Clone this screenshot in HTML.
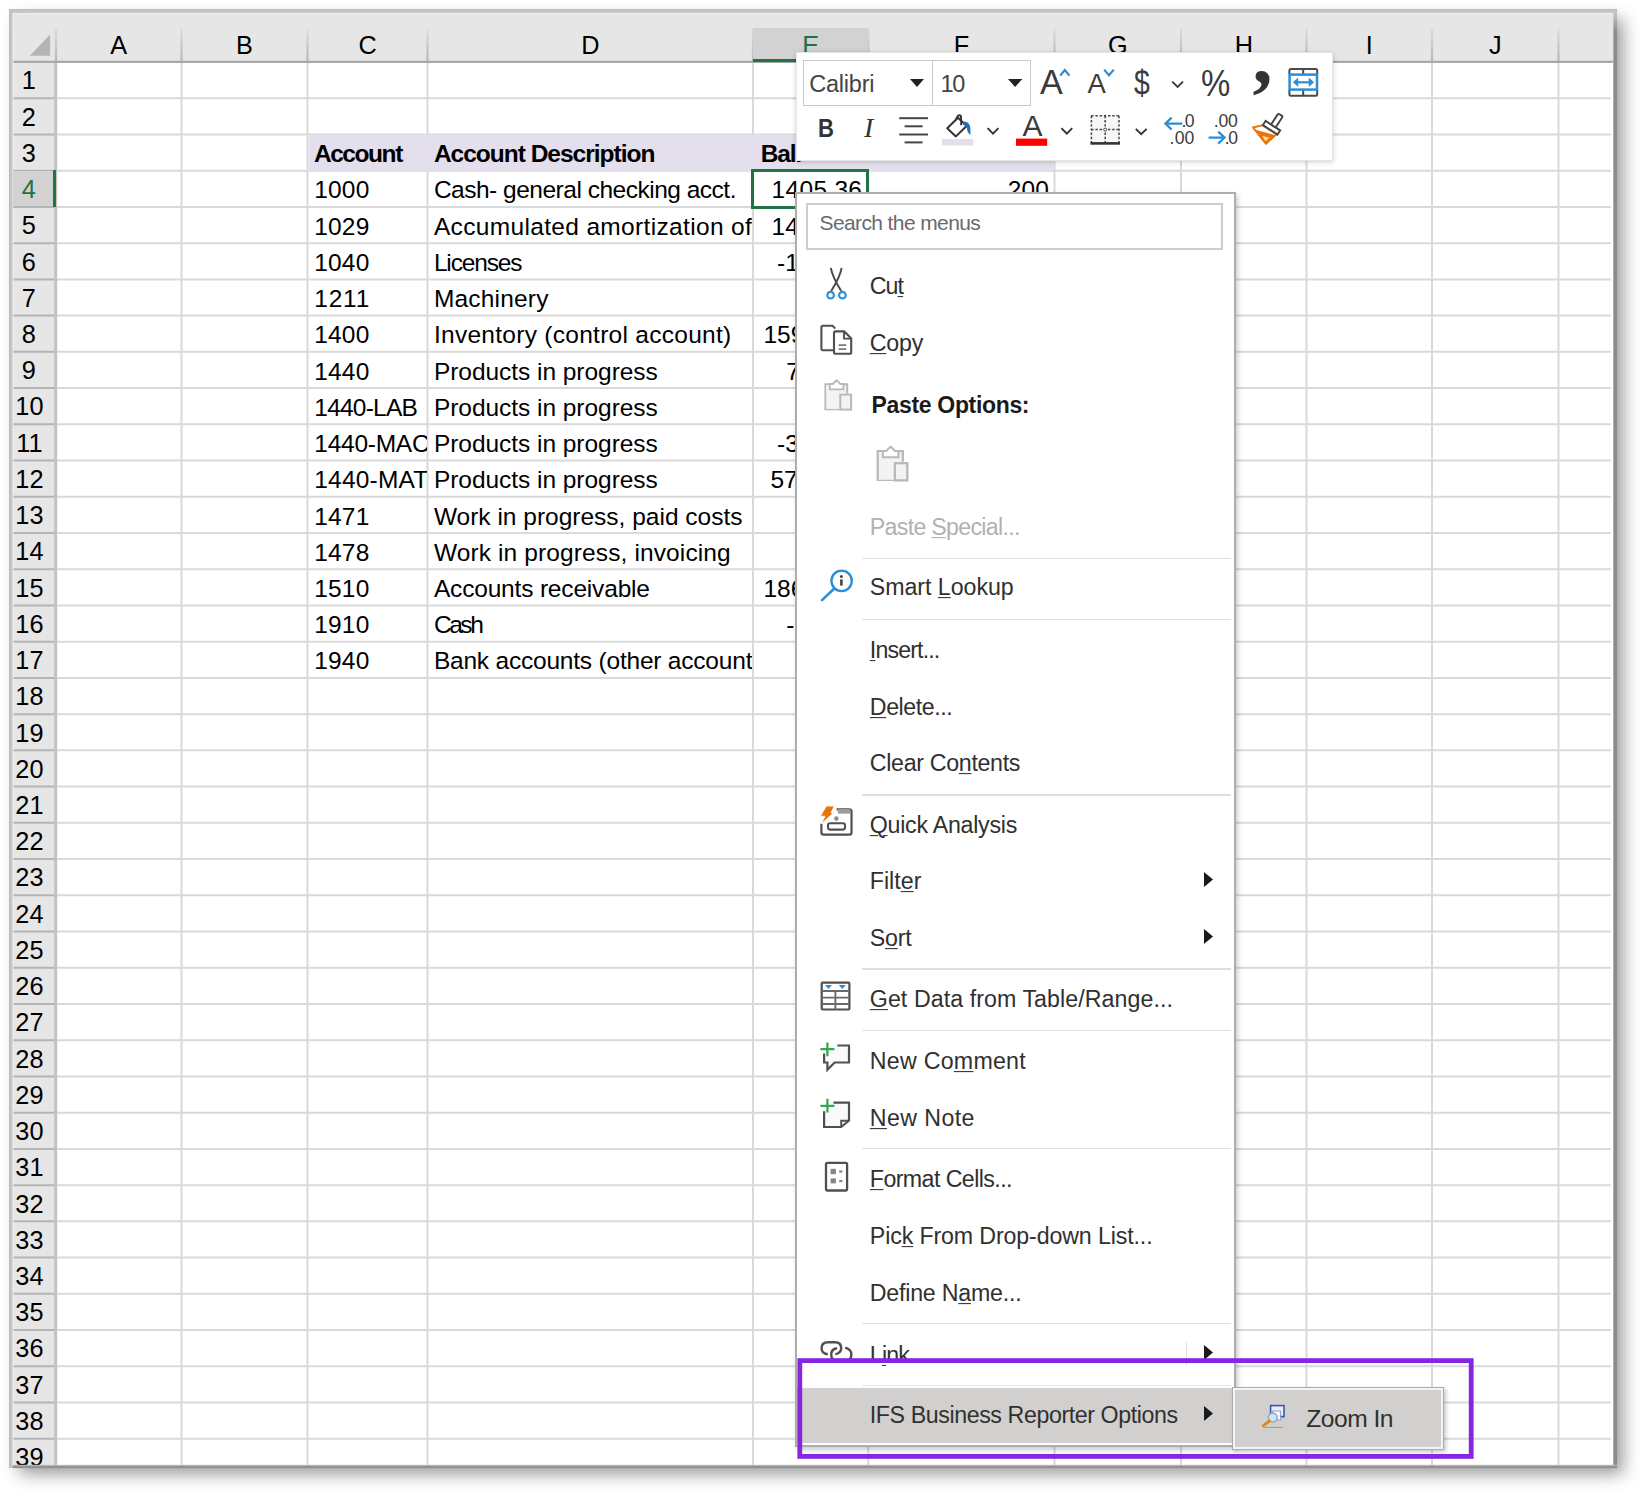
<!DOCTYPE html>
<html lang="en"><head><meta charset="utf-8"><title>Excel context menu</title>
<style>
html,body{margin:0;padding:0;background:#fff;}
body{width:1646px;height:1497px;position:relative;overflow:hidden;font-family:"Liberation Sans",sans-serif;}
div{position:absolute;box-sizing:border-box;}
.t{position:absolute;white-space:nowrap;line-height:1;}
u{text-decoration:underline;text-decoration-thickness:1.4px;text-underline-offset:1.8px;}
#frame{background:#fff;box-shadow:8px 8px 16px -2px rgba(0,0,0,.40);}
#sheet{overflow:hidden;background:#fff;}
#mini{background:#fff;box-shadow:0 1px 5px rgba(0,0,0,.20);border:1px solid #e6e6e6;}
.combo{border:1.3px solid #c9c9c9;background:#fff;}
#ctx{background:#fff;border:2px solid #adadad;box-shadow:2px 3px 5px rgba(0,0,0,.20);}
#search{border:2px solid #cfcdcb;background:#fff;}
#sub{background:#d2d0ce;border:1.5px solid #ababab;box-shadow:inset 0 0 0 2px #f4f4f4, 2px 2px 4px rgba(0,0,0,.22);}
</style></head>
<body>
<div id="frame" style="left:9px;top:9px;width:1608px;height:1459px;"></div>
<div id="sheet" style="left:12.6px;top:13px;width:1600.8px;height:1451.9px;">
<div style="position:absolute;left:-12.6px;top:-13px;width:1646px;height:1497px;">
<div style="left:12.60px;top:13.00px;width:1600.20px;height:49.00px;background:#e6e6e6;"></div>
<div style="left:12.60px;top:62.00px;width:42.90px;height:1403.00px;background:#e6e6e6;"></div>
<svg style="position:absolute;left:0;top:0" width="1646" height="1497" shape-rendering="geometricPrecision"><line x1="181.50" y1="62.00" x2="181.50" y2="1465.00" stroke="#d9d9d9" stroke-width="2.0"/><line x1="307.50" y1="62.00" x2="307.50" y2="1465.00" stroke="#d9d9d9" stroke-width="2.0"/><line x1="427.50" y1="62.00" x2="427.50" y2="1465.00" stroke="#d9d9d9" stroke-width="2.0"/><line x1="753.00" y1="62.00" x2="753.00" y2="1465.00" stroke="#d9d9d9" stroke-width="2.0"/><line x1="868.30" y1="62.00" x2="868.30" y2="1465.00" stroke="#d9d9d9" stroke-width="2.0"/><line x1="1054.50" y1="62.00" x2="1054.50" y2="1465.00" stroke="#d9d9d9" stroke-width="2.0"/><line x1="1181.00" y1="62.00" x2="1181.00" y2="1465.00" stroke="#d9d9d9" stroke-width="2.0"/><line x1="1306.50" y1="62.00" x2="1306.50" y2="1465.00" stroke="#d9d9d9" stroke-width="2.0"/><line x1="1432.00" y1="62.00" x2="1432.00" y2="1465.00" stroke="#d9d9d9" stroke-width="2.0"/><line x1="1558.50" y1="62.00" x2="1558.50" y2="1465.00" stroke="#d9d9d9" stroke-width="2.0"/><line x1="55.50" y1="98.23" x2="1610.90" y2="98.23" stroke="#d9d9d9" stroke-width="2.0"/><line x1="55.50" y1="134.46" x2="1610.90" y2="134.46" stroke="#d9d9d9" stroke-width="2.0"/><line x1="55.50" y1="170.69" x2="1610.90" y2="170.69" stroke="#d9d9d9" stroke-width="2.0"/><line x1="55.50" y1="206.92" x2="1610.90" y2="206.92" stroke="#d9d9d9" stroke-width="2.0"/><line x1="55.50" y1="243.15" x2="1610.90" y2="243.15" stroke="#d9d9d9" stroke-width="2.0"/><line x1="55.50" y1="279.38" x2="1610.90" y2="279.38" stroke="#d9d9d9" stroke-width="2.0"/><line x1="55.50" y1="315.61" x2="1610.90" y2="315.61" stroke="#d9d9d9" stroke-width="2.0"/><line x1="55.50" y1="351.84" x2="1610.90" y2="351.84" stroke="#d9d9d9" stroke-width="2.0"/><line x1="55.50" y1="388.07" x2="1610.90" y2="388.07" stroke="#d9d9d9" stroke-width="2.0"/><line x1="55.50" y1="424.30" x2="1610.90" y2="424.30" stroke="#d9d9d9" stroke-width="2.0"/><line x1="55.50" y1="460.53" x2="1610.90" y2="460.53" stroke="#d9d9d9" stroke-width="2.0"/><line x1="55.50" y1="496.76" x2="1610.90" y2="496.76" stroke="#d9d9d9" stroke-width="2.0"/><line x1="55.50" y1="532.99" x2="1610.90" y2="532.99" stroke="#d9d9d9" stroke-width="2.0"/><line x1="55.50" y1="569.22" x2="1610.90" y2="569.22" stroke="#d9d9d9" stroke-width="2.0"/><line x1="55.50" y1="605.45" x2="1610.90" y2="605.45" stroke="#d9d9d9" stroke-width="2.0"/><line x1="55.50" y1="641.68" x2="1610.90" y2="641.68" stroke="#d9d9d9" stroke-width="2.0"/><line x1="55.50" y1="677.91" x2="1610.90" y2="677.91" stroke="#d9d9d9" stroke-width="2.0"/><line x1="55.50" y1="714.14" x2="1610.90" y2="714.14" stroke="#d9d9d9" stroke-width="2.0"/><line x1="55.50" y1="750.37" x2="1610.90" y2="750.37" stroke="#d9d9d9" stroke-width="2.0"/><line x1="55.50" y1="786.60" x2="1610.90" y2="786.60" stroke="#d9d9d9" stroke-width="2.0"/><line x1="55.50" y1="822.83" x2="1610.90" y2="822.83" stroke="#d9d9d9" stroke-width="2.0"/><line x1="55.50" y1="859.06" x2="1610.90" y2="859.06" stroke="#d9d9d9" stroke-width="2.0"/><line x1="55.50" y1="895.29" x2="1610.90" y2="895.29" stroke="#d9d9d9" stroke-width="2.0"/><line x1="55.50" y1="931.52" x2="1610.90" y2="931.52" stroke="#d9d9d9" stroke-width="2.0"/><line x1="55.50" y1="967.75" x2="1610.90" y2="967.75" stroke="#d9d9d9" stroke-width="2.0"/><line x1="55.50" y1="1003.98" x2="1610.90" y2="1003.98" stroke="#d9d9d9" stroke-width="2.0"/><line x1="55.50" y1="1040.21" x2="1610.90" y2="1040.21" stroke="#d9d9d9" stroke-width="2.0"/><line x1="55.50" y1="1076.44" x2="1610.90" y2="1076.44" stroke="#d9d9d9" stroke-width="2.0"/><line x1="55.50" y1="1112.67" x2="1610.90" y2="1112.67" stroke="#d9d9d9" stroke-width="2.0"/><line x1="55.50" y1="1148.90" x2="1610.90" y2="1148.90" stroke="#d9d9d9" stroke-width="2.0"/><line x1="55.50" y1="1185.13" x2="1610.90" y2="1185.13" stroke="#d9d9d9" stroke-width="2.0"/><line x1="55.50" y1="1221.36" x2="1610.90" y2="1221.36" stroke="#d9d9d9" stroke-width="2.0"/><line x1="55.50" y1="1257.59" x2="1610.90" y2="1257.59" stroke="#d9d9d9" stroke-width="2.0"/><line x1="55.50" y1="1293.82" x2="1610.90" y2="1293.82" stroke="#d9d9d9" stroke-width="2.0"/><line x1="55.50" y1="1330.05" x2="1610.90" y2="1330.05" stroke="#d9d9d9" stroke-width="2.0"/><line x1="55.50" y1="1366.28" x2="1610.90" y2="1366.28" stroke="#d9d9d9" stroke-width="2.0"/><line x1="55.50" y1="1402.51" x2="1610.90" y2="1402.51" stroke="#d9d9d9" stroke-width="2.0"/><line x1="55.50" y1="1438.74" x2="1610.90" y2="1438.74" stroke="#d9d9d9" stroke-width="2.0"/><line x1="55.50" y1="1474.97" x2="1610.90" y2="1474.97" stroke="#d9d9d9" stroke-width="2.0"/><rect x="308.40" y="135.36" width="745.20" height="35.23" fill="#e4dfec"/><defs><linearGradient id="hs" x1="0" y1="0" x2="0" y2="1"><stop offset="0" stop-color="#dcdcdc"/><stop offset="1" stop-color="#b6b6b6"/></linearGradient></defs><rect x="54.90" y="28.4" width="2.2" height="33.6" fill="url(#hs)"/><rect x="180.40" y="28.4" width="2.2" height="33.6" fill="url(#hs)"/><rect x="306.40" y="28.4" width="2.2" height="33.6" fill="url(#hs)"/><rect x="426.40" y="28.4" width="2.2" height="33.6" fill="url(#hs)"/><rect x="751.90" y="28.4" width="2.2" height="33.6" fill="url(#hs)"/><rect x="867.20" y="28.4" width="2.2" height="33.6" fill="url(#hs)"/><rect x="1053.40" y="28.4" width="2.2" height="33.6" fill="url(#hs)"/><rect x="1179.90" y="28.4" width="2.2" height="33.6" fill="url(#hs)"/><rect x="1305.40" y="28.4" width="2.2" height="33.6" fill="url(#hs)"/><rect x="1430.90" y="28.4" width="2.2" height="33.6" fill="url(#hs)"/><rect x="1557.40" y="28.4" width="2.2" height="33.6" fill="url(#hs)"/><line x1="12.60" y1="98.23" x2="55.50" y2="98.23" stroke="#b4b4b4" stroke-width="2.0"/><line x1="12.60" y1="134.46" x2="55.50" y2="134.46" stroke="#b4b4b4" stroke-width="2.0"/><line x1="12.60" y1="170.69" x2="55.50" y2="170.69" stroke="#b4b4b4" stroke-width="2.0"/><line x1="12.60" y1="206.92" x2="55.50" y2="206.92" stroke="#b4b4b4" stroke-width="2.0"/><line x1="12.60" y1="243.15" x2="55.50" y2="243.15" stroke="#b4b4b4" stroke-width="2.0"/><line x1="12.60" y1="279.38" x2="55.50" y2="279.38" stroke="#b4b4b4" stroke-width="2.0"/><line x1="12.60" y1="315.61" x2="55.50" y2="315.61" stroke="#b4b4b4" stroke-width="2.0"/><line x1="12.60" y1="351.84" x2="55.50" y2="351.84" stroke="#b4b4b4" stroke-width="2.0"/><line x1="12.60" y1="388.07" x2="55.50" y2="388.07" stroke="#b4b4b4" stroke-width="2.0"/><line x1="12.60" y1="424.30" x2="55.50" y2="424.30" stroke="#b4b4b4" stroke-width="2.0"/><line x1="12.60" y1="460.53" x2="55.50" y2="460.53" stroke="#b4b4b4" stroke-width="2.0"/><line x1="12.60" y1="496.76" x2="55.50" y2="496.76" stroke="#b4b4b4" stroke-width="2.0"/><line x1="12.60" y1="532.99" x2="55.50" y2="532.99" stroke="#b4b4b4" stroke-width="2.0"/><line x1="12.60" y1="569.22" x2="55.50" y2="569.22" stroke="#b4b4b4" stroke-width="2.0"/><line x1="12.60" y1="605.45" x2="55.50" y2="605.45" stroke="#b4b4b4" stroke-width="2.0"/><line x1="12.60" y1="641.68" x2="55.50" y2="641.68" stroke="#b4b4b4" stroke-width="2.0"/><line x1="12.60" y1="677.91" x2="55.50" y2="677.91" stroke="#b4b4b4" stroke-width="2.0"/><line x1="12.60" y1="714.14" x2="55.50" y2="714.14" stroke="#b4b4b4" stroke-width="2.0"/><line x1="12.60" y1="750.37" x2="55.50" y2="750.37" stroke="#b4b4b4" stroke-width="2.0"/><line x1="12.60" y1="786.60" x2="55.50" y2="786.60" stroke="#b4b4b4" stroke-width="2.0"/><line x1="12.60" y1="822.83" x2="55.50" y2="822.83" stroke="#b4b4b4" stroke-width="2.0"/><line x1="12.60" y1="859.06" x2="55.50" y2="859.06" stroke="#b4b4b4" stroke-width="2.0"/><line x1="12.60" y1="895.29" x2="55.50" y2="895.29" stroke="#b4b4b4" stroke-width="2.0"/><line x1="12.60" y1="931.52" x2="55.50" y2="931.52" stroke="#b4b4b4" stroke-width="2.0"/><line x1="12.60" y1="967.75" x2="55.50" y2="967.75" stroke="#b4b4b4" stroke-width="2.0"/><line x1="12.60" y1="1003.98" x2="55.50" y2="1003.98" stroke="#b4b4b4" stroke-width="2.0"/><line x1="12.60" y1="1040.21" x2="55.50" y2="1040.21" stroke="#b4b4b4" stroke-width="2.0"/><line x1="12.60" y1="1076.44" x2="55.50" y2="1076.44" stroke="#b4b4b4" stroke-width="2.0"/><line x1="12.60" y1="1112.67" x2="55.50" y2="1112.67" stroke="#b4b4b4" stroke-width="2.0"/><line x1="12.60" y1="1148.90" x2="55.50" y2="1148.90" stroke="#b4b4b4" stroke-width="2.0"/><line x1="12.60" y1="1185.13" x2="55.50" y2="1185.13" stroke="#b4b4b4" stroke-width="2.0"/><line x1="12.60" y1="1221.36" x2="55.50" y2="1221.36" stroke="#b4b4b4" stroke-width="2.0"/><line x1="12.60" y1="1257.59" x2="55.50" y2="1257.59" stroke="#b4b4b4" stroke-width="2.0"/><line x1="12.60" y1="1293.82" x2="55.50" y2="1293.82" stroke="#b4b4b4" stroke-width="2.0"/><line x1="12.60" y1="1330.05" x2="55.50" y2="1330.05" stroke="#b4b4b4" stroke-width="2.0"/><line x1="12.60" y1="1366.28" x2="55.50" y2="1366.28" stroke="#b4b4b4" stroke-width="2.0"/><line x1="12.60" y1="1402.51" x2="55.50" y2="1402.51" stroke="#b4b4b4" stroke-width="2.0"/><line x1="12.60" y1="1438.74" x2="55.50" y2="1438.74" stroke="#b4b4b4" stroke-width="2.0"/><line x1="12.60" y1="1474.97" x2="55.50" y2="1474.97" stroke="#b4b4b4" stroke-width="2.0"/><line x1="55.70" y1="62.00" x2="55.70" y2="1465.00" stroke="#c2c2c2" stroke-width="3.0"/><line x1="12.60" y1="61.80" x2="1612.80" y2="61.80" stroke="#a9a9a9" stroke-width="2.2"/><line x1="12.80" y1="13.00" x2="12.80" y2="1465.00" stroke="#f2f2f2" stroke-width="1.2"/><line x1="12.60" y1="13.20" x2="1612.80" y2="13.20" stroke="#f2f2f2" stroke-width="1.2"/></svg>
<svg style="position:absolute;left:28px;top:34px" width="24" height="24"><polygon points="22.1,0.5 22.1,21.7 1.8,21.7" fill="#b4b4b4"/></svg>
<div style="left:753.00px;top:28.00px;width:115.30px;height:34.00px;background:#d2d2d2;"></div>
<div style="left:753.00px;top:59.00px;width:115.30px;height:3.00px;background:#217346;"></div>
<div style="left:12.60px;top:171.49px;width:42.90px;height:34.63px;background:#d2d2d2;"></div>
<div style="left:53.30px;top:170.19px;width:3.00px;height:37.23px;background:#217346;"></div>
<span class="t" style="left:110.27px;top:32.98px;font-size:25.3px;">A</span>
<span class="t" style="left:236.09px;top:32.98px;font-size:25.3px;">B</span>
<span class="t" style="left:358.39px;top:32.98px;font-size:25.3px;">C</span>
<span class="t" style="left:581.14px;top:32.98px;font-size:25.3px;">D</span>
<span class="t" style="left:802.24px;top:32.98px;font-size:25.3px;color:#217346;">E</span>
<span class="t" style="left:953.68px;top:32.98px;font-size:25.3px;">F</span>
<span class="t" style="left:1107.88px;top:32.98px;font-size:25.3px;">G</span>
<span class="t" style="left:1234.64px;top:32.98px;font-size:25.3px;">H</span>
<span class="t" style="left:1365.71px;top:32.98px;font-size:25.3px;">I</span>
<span class="t" style="left:1488.92px;top:32.98px;font-size:25.3px;">J</span>
<span class="t" style="left:21.86px;top:68.38px;font-size:25.3px;">1</span>
<span class="t" style="left:21.86px;top:104.61px;font-size:25.3px;">2</span>
<span class="t" style="left:21.86px;top:140.84px;font-size:25.3px;">3</span>
<span class="t" style="left:21.86px;top:177.07px;font-size:25.3px;color:#217346;">4</span>
<span class="t" style="left:21.86px;top:213.30px;font-size:25.3px;">5</span>
<span class="t" style="left:21.86px;top:249.53px;font-size:25.3px;">6</span>
<span class="t" style="left:21.86px;top:285.76px;font-size:25.3px;">7</span>
<span class="t" style="left:21.86px;top:321.99px;font-size:25.3px;">8</span>
<span class="t" style="left:21.86px;top:358.22px;font-size:25.3px;">9</span>
<span class="t" style="left:15.33px;top:394.45px;font-size:25.3px;">10</span>
<span class="t" style="left:16.27px;top:430.68px;font-size:25.3px;">11</span>
<span class="t" style="left:15.33px;top:466.91px;font-size:25.3px;">12</span>
<span class="t" style="left:15.33px;top:503.14px;font-size:25.3px;">13</span>
<span class="t" style="left:15.33px;top:539.37px;font-size:25.3px;">14</span>
<span class="t" style="left:15.33px;top:575.60px;font-size:25.3px;">15</span>
<span class="t" style="left:15.33px;top:611.83px;font-size:25.3px;">16</span>
<span class="t" style="left:15.33px;top:648.06px;font-size:25.3px;">17</span>
<span class="t" style="left:15.33px;top:684.29px;font-size:25.3px;">18</span>
<span class="t" style="left:15.33px;top:720.52px;font-size:25.3px;">19</span>
<span class="t" style="left:15.33px;top:756.75px;font-size:25.3px;">20</span>
<span class="t" style="left:15.33px;top:792.98px;font-size:25.3px;">21</span>
<span class="t" style="left:15.33px;top:829.21px;font-size:25.3px;">22</span>
<span class="t" style="left:15.33px;top:865.44px;font-size:25.3px;">23</span>
<span class="t" style="left:15.33px;top:901.67px;font-size:25.3px;">24</span>
<span class="t" style="left:15.33px;top:937.90px;font-size:25.3px;">25</span>
<span class="t" style="left:15.33px;top:974.13px;font-size:25.3px;">26</span>
<span class="t" style="left:15.33px;top:1010.36px;font-size:25.3px;">27</span>
<span class="t" style="left:15.33px;top:1046.59px;font-size:25.3px;">28</span>
<span class="t" style="left:15.33px;top:1082.82px;font-size:25.3px;">29</span>
<span class="t" style="left:15.33px;top:1119.05px;font-size:25.3px;">30</span>
<span class="t" style="left:15.33px;top:1155.28px;font-size:25.3px;">31</span>
<span class="t" style="left:15.33px;top:1191.51px;font-size:25.3px;">32</span>
<span class="t" style="left:15.33px;top:1227.74px;font-size:25.3px;">33</span>
<span class="t" style="left:15.33px;top:1263.97px;font-size:25.3px;">34</span>
<span class="t" style="left:15.33px;top:1300.20px;font-size:25.3px;">35</span>
<span class="t" style="left:15.33px;top:1336.43px;font-size:25.3px;">36</span>
<span class="t" style="left:15.33px;top:1372.66px;font-size:25.3px;">37</span>
<span class="t" style="left:15.33px;top:1408.89px;font-size:25.3px;">38</span>
<span class="t" style="left:15.33px;top:1445.12px;font-size:25.3px;">39</span>
<span class="t" style="left:313.90px;top:142.22px;font-size:24.5px;letter-spacing:-1.433px;font-weight:bold;">Account</span>
<span class="t" style="left:433.90px;top:142.22px;font-size:24.5px;letter-spacing:-1.006px;font-weight:bold;">Account Description</span>
<span class="t" style="left:760.80px;top:142.22px;font-size:24.5px;font-weight:bold;letter-spacing:-1.2px;">Bal.</span>
<div style="position:absolute;left:307.5px;top:0;width:119.19999999999999px;height:1497px;overflow:hidden;"><div style="position:absolute;left:-307.5px;top:0;width:1646px;height:1497px;">
<span class="t" style="left:314.30px;top:178.45px;font-size:24.5px;letter-spacing:0.162px;">1000</span>
<span class="t" style="left:314.30px;top:214.68px;font-size:24.5px;letter-spacing:0.162px;">1029</span>
<span class="t" style="left:314.30px;top:250.91px;font-size:24.5px;letter-spacing:0.162px;">1040</span>
<span class="t" style="left:314.30px;top:287.14px;font-size:24.5px;letter-spacing:0.775px;">1211</span>
<span class="t" style="left:314.30px;top:323.37px;font-size:24.5px;letter-spacing:0.162px;">1400</span>
<span class="t" style="left:314.30px;top:359.60px;font-size:24.5px;letter-spacing:0.162px;">1440</span>
<span class="t" style="left:314.30px;top:395.83px;font-size:24.5px;letter-spacing:-0.775px;">1440-LAB</span>
<span class="t" style="left:314.30px;top:432.06px;font-size:24.5px;letter-spacing:-0.259px;">1440-MAC</span>
<span class="t" style="left:314.30px;top:468.29px;font-size:24.5px;letter-spacing:0.189px;">1440-MAT</span>
<span class="t" style="left:314.30px;top:504.52px;font-size:24.5px;letter-spacing:0.162px;">1471</span>
<span class="t" style="left:314.30px;top:540.75px;font-size:24.5px;letter-spacing:0.162px;">1478</span>
<span class="t" style="left:314.30px;top:576.98px;font-size:24.5px;letter-spacing:0.162px;">1510</span>
<span class="t" style="left:314.30px;top:613.21px;font-size:24.5px;letter-spacing:0.162px;">1910</span>
<span class="t" style="left:314.30px;top:649.44px;font-size:24.5px;letter-spacing:0.162px;">1940</span>
</div></div>
<div style="position:absolute;left:427.5px;top:0;width:324.70000000000005px;height:1497px;overflow:hidden;"><div style="position:absolute;left:-427.5px;top:0;width:1646px;height:1497px;">
<span class="t" style="left:433.90px;top:178.45px;font-size:24.5px;letter-spacing:-0.494px;">Cash- general checking acct.</span>
<span class="t" style="left:433.90px;top:214.68px;font-size:24.5px;letter-spacing:0.339px;">Accumulated amortization of</span>
<span class="t" style="left:433.90px;top:250.91px;font-size:24.5px;letter-spacing:-1.165px;">Licenses</span>
<span class="t" style="left:433.90px;top:287.14px;font-size:24.5px;letter-spacing:0.192px;">Machinery</span>
<span class="t" style="left:433.90px;top:323.37px;font-size:24.5px;letter-spacing:0.282px;">Inventory (control account)</span>
<span class="t" style="left:433.90px;top:359.60px;font-size:24.5px;letter-spacing:-0.040px;">Products in progress</span>
<span class="t" style="left:433.90px;top:395.83px;font-size:24.5px;letter-spacing:-0.040px;">Products in progress</span>
<span class="t" style="left:433.90px;top:432.06px;font-size:24.5px;letter-spacing:-0.040px;">Products in progress</span>
<span class="t" style="left:433.90px;top:468.29px;font-size:24.5px;letter-spacing:-0.040px;">Products in progress</span>
<span class="t" style="left:433.90px;top:504.52px;font-size:24.5px;">Work in progress, paid costs</span>
<span class="t" style="left:433.90px;top:540.75px;font-size:24.5px;letter-spacing:0.122px;">Work in progress, invoicing</span>
<span class="t" style="left:433.90px;top:576.98px;font-size:24.5px;letter-spacing:-0.176px;">Accounts receivable</span>
<span class="t" style="left:433.90px;top:613.21px;font-size:24.5px;letter-spacing:-2.436px;">Cash</span>
<span class="t" style="left:433.90px;top:649.44px;font-size:24.5px;letter-spacing:-0.207px;">Bank accounts (other accounts)</span>
</div></div>
<span class="t" style="left:771.60px;top:178.45px;font-size:24.5px;letter-spacing:0.305px;">1405.36</span>
<span class="t" style="left:771.60px;top:214.68px;font-size:24.5px;">1429.05</span>
<span class="t" style="left:777.00px;top:250.91px;font-size:24.5px;">-100.00</span>
<span class="t" style="left:763.40px;top:323.37px;font-size:24.5px;">15900.00</span>
<span class="t" style="left:786.20px;top:359.60px;font-size:24.5px;">700.00</span>
<span class="t" style="left:777.00px;top:432.06px;font-size:24.5px;">-300.00</span>
<span class="t" style="left:770.40px;top:468.29px;font-size:24.5px;">5700.00</span>
<span class="t" style="left:763.40px;top:576.98px;font-size:24.5px;">18600.00</span>
<span class="t" style="left:786.20px;top:613.21px;font-size:24.5px;">-50.00</span>
<span class="t" style="left:1007.80px;top:178.45px;font-size:24.5px;letter-spacing:0.043px;">200</span>
<div style="position:absolute;left:751.4px;top:169.4px;width:117.7px;height:39.2px;border:3px solid #217346;box-sizing:border-box;"></div>
</div></div>
<svg style="position:absolute;left:0;top:0" width="1646" height="1497"><defs><linearGradient id="rb" x1="0" y1="0" x2="0" y2="1"><stop offset="0" stop-color="#c6c6c6"/><stop offset="0.004" stop-color="#c0c0c0"/><stop offset="0.016" stop-color="#8b8b8b"/><stop offset="1" stop-color="#8b8b8b"/></linearGradient><linearGradient id="bb" x1="0" y1="0" x2="0" y2="1"><stop offset="0" stop-color="#c8c8c8"/><stop offset="0.45" stop-color="#9a9a9a"/><stop offset="1" stop-color="#888"/></linearGradient></defs><rect x="9" y="9" width="1608" height="4" fill="#c6c6c6"/><rect x="9" y="9" width="3.6" height="1459" fill="#c6c6c6"/><rect x="1613.3" y="9" width="3.8" height="1459" fill="url(#rb)"/><rect x="12.6" y="1464.8" width="1604.5" height="3.3" fill="url(#bb)"/><rect x="9" y="9" width="1608" height="1.3" fill="#bdbdbd"/><rect x="9" y="9" width="1.3" height="1459" fill="#bdbdbd"/></svg>
<div id="mini" style="left:796px;top:52.4px;width:537.2px;height:108.79999999999998px;"></div>
<div class="combo" style="left:803.3px;top:60px;width:130px;height:46.3px;"></div>
<div class="combo" style="left:932.3px;top:60px;width:99px;height:46.3px;"></div>
<span class="t" style="left:809.20px;top:73.21px;font-size:23.5px;letter-spacing:-0.220px;color:#444;">Calibri</span>
<span class="t" style="left:940.60px;top:73.21px;font-size:23.5px;letter-spacing:-1.500px;color:#444;">10</span>
<svg style="position:absolute;left:910px;top:78.8px" width="14.0" height="8.0"><polygon points="0,0 14.0,0 7.0,8.0" fill="#222"/></svg>
<svg style="position:absolute;left:1007.6px;top:78.8px" width="14.2" height="8.0"><polygon points="0,0 14.2,0 7.1,8.0" fill="#222"/></svg>
<span class="t" style="left:1040.00px;top:64.55px;font-size:34.2px;color:#3b3b3b;">A</span>
<span class="t" style="left:1087.40px;top:70.22px;font-size:27.5px;color:#3b3b3b;">A</span>
<span class="t" style="left:1134.00px;top:65.65px;font-size:35.5px;color:#3b3b3b;transform:scaleX(0.8);transform-origin:left;">$</span>
<span class="t" style="left:1201.00px;top:65.16px;font-size:37.5px;color:#3b3b3b;transform:scaleX(0.88);transform-origin:left;">%</span>
<span class="t" style="left:1252.6px;top:16.2px;font-size:80px;font-family:'Liberation Serif',serif;font-weight:bold;color:#333;">,</span>
<span class="t" style="left:817.80px;top:115.60px;font-size:25.4px;font-weight:bold;color:#333;transform:scaleX(0.87);transform-origin:left;">B</span>
<span class="t" style="left:864px;top:113.8px;font-size:28px;font-family:'Liberation Serif',serif;font-style:italic;color:#333;">I</span>
<span class="t" style="left:1022.60px;top:111.30px;font-size:30px;color:#3b3b3b;">A</span>
<span class="t" style="left:1181.40px;top:113.30px;font-size:17.6px;letter-spacing:-1.500px;color:#3b3b3b;">.0</span>
<span class="t" style="left:1169.60px;top:129.50px;font-size:17.6px;letter-spacing:0.168px;color:#3b3b3b;">.00</span>
<span class="t" style="left:1213.80px;top:113.30px;font-size:17.6px;letter-spacing:-0.232px;color:#3b3b3b;">.00</span>
<span class="t" style="left:1224.80px;top:129.50px;font-size:17.6px;letter-spacing:-1.500px;color:#3b3b3b;">.0</span>
<svg style="position:absolute;left:0;top:0;overflow:visible" width="1646" height="1497" fill="none" stroke-linecap="butt" stroke-linejoin="miter"><polyline points="1060.2,75.6 1064.8,70 1069.4,75.6" stroke="#2b8dd6" stroke-width="2.2"/><polyline points="1104.2,69.6 1109,75.2 1113.8,69.6" stroke="#2b8dd6" stroke-width="2.2"/><polyline points="1172.2,81.6 1177.6,87 1183,81.6" stroke="#3b3b3b" stroke-width="1.9"/><path d="M1289.4,74 V70.5 Q1289.4,69 1290.9,69 H1315.7 Q1317.2,69 1317.2,70.5 V74 M1289.4,90 V94.2 Q1289.4,95.7 1290.9,95.7 H1315.7 Q1317.2,95.7 1317.2,94.2 V90 M1303.2,69 V74 M1303.2,90 V95.7" stroke="#4a4a4a" stroke-width="2"/><rect x="1289.6" y="74.6" width="27.4" height="15" stroke="#2b8dd6" stroke-width="2.5" fill="#fff"/><path d="M1294.5,82.3 H1312.5" stroke="#2b8dd6" stroke-width="2.2"/><path d="M1293,82.3 L1298.2,77.6 V87 Z M1314,82.3 L1308.8,77.6 V87 Z" fill="#2b8dd6" stroke="none"/><line x1="899.2" y1="118.2" x2="928" y2="118.2" stroke="#444" stroke-width="2"/><line x1="904.6" y1="126.3" x2="922.6" y2="126.3" stroke="#444" stroke-width="2"/><line x1="899.2" y1="134.5" x2="928" y2="134.5" stroke="#444" stroke-width="2"/><line x1="904.6" y1="142.4" x2="922.6" y2="142.4" stroke="#444" stroke-width="2"/><path d="M947.2,128.3 L958,117.8 L966.6,126 L955.9,136.4 Z" stroke="#333" stroke-width="2" stroke-linejoin="round" fill="#fff"/><path d="M955.6,120 L957.6,116.2 Q959.4,114.4 961,116.2 L961.2,125.2" stroke="#333" stroke-width="1.9"/><path d="M963.8,121.4 Q969.8,121.6 970.4,128 L970.4,135 Q966.8,132 967,127.8 Q966.4,125 962.8,124.4 Z" fill="#1e6fc0" stroke="none"/><rect x="942.1" y="139" width="31.2" height="6.6" fill="#e4dfec" stroke="none"/><polyline points="987.6,128.2 993,133.6 998.4,128.2" stroke="#333" stroke-width="1.9"/><rect x="1016" y="138.6" width="31.2" height="7.2" fill="#ff0000" stroke="none"/><polyline points="1061.4,128.2 1066.8,133.6 1072.2,128.2" stroke="#333" stroke-width="1.9"/><rect x="1091" y="116" width="28" height="27" fill="#f7f7f7" stroke="none"/><path d="M1091.2,115.8 H1119.4 M1091.2,129.6 H1119.4 M1091.4,115.8 V143 M1105.2,115.8 V143 M1119,115.8 V143" stroke="#444" stroke-width="1.5" stroke-dasharray="2.4 1.8"/><path d="M1090.4,143.4 H1120" stroke="#333" stroke-width="2.6"/><circle cx="1105.2" cy="129.6" r="1.5" stroke="#444" stroke-width="1" fill="#fff"/><polyline points="1135.8,128.8 1141.2,134.2 1146.6,128.8" stroke="#333" stroke-width="1.9"/><path d="M1165.5,123.6 H1182.4 M1171.6,117.6 L1165.4,123.6 L1171.6,129.6" stroke="#2b8dd6" stroke-width="2.2"/><path d="M1208.6,137.6 H1224.6 M1218.2,131.6 L1224.6,137.6 L1218.2,143.6" stroke="#2b8dd6" stroke-width="2.2"/><g transform="translate(1272.9,125.65) rotate(33)"><path d="M-8.6,5 L-15.7,12.4 L4.1,19 L7.6,5.3 Z" fill="#fff" stroke="#e8740c" stroke-width="1.9" stroke-linejoin="round"/><path d="M-12.4,13 L4.1,19 L7.4,6.6 Z" fill="#e8740c" stroke="none"/><path d="M-3.6,14.4 L3.7,12.1 L2.2,17.1 Z" fill="#ffe08a" stroke="none"/><rect x="-8.7" y="0" width="17.4" height="5" fill="#fff" stroke="#444" stroke-width="1.9"/><rect x="-2.1" y="-13.2" width="5.4" height="13.2" rx="1.4" fill="#fff" stroke="#444" stroke-width="1.9"/></g></svg>
<div id="ctx" style="left:795.3px;top:192.0px;width:440.70000000000005px;height:1254.6px;"></div>
<div id="search" style="left:806.2px;top:203.2px;width:417.2px;height:46.6px;"></div>
<span class="t" style="left:819.50px;top:212.12px;font-size:21.0px;letter-spacing:-0.608px;color:#6a6a6a;">Search the menus</span>
<span class="t" style="left:869.80px;top:274.66px;font-size:23.2px;letter-spacing:-0.938px;color:#303030;transform:scaleY(1.05);transform-origin:0 84.65%;">Cu<u>t</u></span>
<span class="t" style="left:869.80px;top:332.06px;font-size:23.2px;letter-spacing:-0.224px;color:#303030;transform:scaleY(1.05);transform-origin:0 84.65%;"><u>C</u>opy</span>
<span class="t" style="left:869.80px;top:516.06px;font-size:23.2px;letter-spacing:-0.703px;color:#b1b1b1;transform:scaleY(1.05);transform-origin:0 84.65%;">Paste <u>S</u>pecial...</span>
<span class="t" style="left:869.80px;top:576.16px;font-size:23.2px;letter-spacing:-0.038px;color:#303030;transform:scaleY(1.05);transform-origin:0 84.65%;">Smart <u>L</u>ookup</span>
<span class="t" style="left:869.80px;top:638.56px;font-size:23.2px;letter-spacing:-0.859px;color:#303030;transform:scaleY(1.05);transform-origin:0 84.65%;"><u>I</u>nsert...</span>
<span class="t" style="left:869.80px;top:695.66px;font-size:23.2px;letter-spacing:-0.428px;color:#303030;transform:scaleY(1.05);transform-origin:0 84.65%;"><u>D</u>elete...</span>
<span class="t" style="left:869.80px;top:752.16px;font-size:23.2px;letter-spacing:-0.311px;color:#303030;transform:scaleY(1.05);transform-origin:0 84.65%;">Clear Co<u>n</u>tents</span>
<span class="t" style="left:869.80px;top:813.76px;font-size:23.2px;letter-spacing:-0.255px;color:#303030;transform:scaleY(1.05);transform-origin:0 84.65%;"><u>Q</u>uick Analysis</span>
<span class="t" style="left:869.80px;top:869.96px;font-size:23.2px;color:#303030;transform:scaleY(1.05);transform-origin:0 84.65%;">Filt<u>e</u>r</span>
<span class="t" style="left:869.80px;top:927.16px;font-size:23.2px;letter-spacing:-0.224px;color:#303030;transform:scaleY(1.05);transform-origin:0 84.65%;">S<u>o</u>rt</span>
<span class="t" style="left:869.80px;top:988.16px;font-size:23.2px;letter-spacing:0.072px;color:#303030;transform:scaleY(1.05);transform-origin:0 84.65%;"><u>G</u>et Data from Table/Range...</span>
<span class="t" style="left:869.80px;top:1049.56px;font-size:23.2px;letter-spacing:0.253px;color:#303030;transform:scaleY(1.05);transform-origin:0 84.65%;">New Co<u>m</u>ment</span>
<span class="t" style="left:869.80px;top:1106.66px;font-size:23.2px;letter-spacing:0.407px;color:#303030;transform:scaleY(1.05);transform-origin:0 84.65%;"><u>N</u>ew Note</span>
<span class="t" style="left:869.80px;top:1167.66px;font-size:23.2px;letter-spacing:-0.571px;color:#303030;transform:scaleY(1.05);transform-origin:0 84.65%;"><u>F</u>ormat Cells...</span>
<span class="t" style="left:869.80px;top:1224.76px;font-size:23.2px;letter-spacing:-0.126px;color:#303030;transform:scaleY(1.05);transform-origin:0 84.65%;">Pic<u>k</u> From Drop-down List...</span>
<span class="t" style="left:869.80px;top:1281.86px;font-size:23.2px;letter-spacing:-0.219px;color:#303030;transform:scaleY(1.05);transform-origin:0 84.65%;">Define N<u>a</u>me...</span>
<span class="t" style="left:871.60px;top:393.63px;font-size:23.0px;letter-spacing:-0.336px;font-weight:bold;color:#1a1a1a;transform:scaleY(1.04);transform-origin:0 84.65%;">Paste Options:</span>
<div style="left:861.80px;top:557.50px;width:369.70px;height:1.60px;background:#e1dfdd;"></div>
<div style="left:861.80px;top:618.70px;width:369.70px;height:1.60px;background:#e1dfdd;"></div>
<div style="left:861.80px;top:794.00px;width:369.70px;height:1.60px;background:#e1dfdd;"></div>
<div style="left:861.80px;top:968.30px;width:369.70px;height:1.60px;background:#e1dfdd;"></div>
<div style="left:861.80px;top:1029.70px;width:369.70px;height:1.60px;background:#e1dfdd;"></div>
<div style="left:861.80px;top:1147.80px;width:369.70px;height:1.60px;background:#e1dfdd;"></div>
<div style="left:861.80px;top:1322.80px;width:369.70px;height:1.60px;background:#e1dfdd;"></div>
<svg style="position:absolute;left:1204.4px;top:872.0px" width="9" height="15"><polygon points="0,0 9,7.5 0,15" fill="#1a1a1a"/></svg>
<svg style="position:absolute;left:1204.4px;top:929.0px" width="9" height="15"><polygon points="0,0 9,7.5 0,15" fill="#1a1a1a"/></svg>
<div style="position:absolute;left:799px;top:1330px;width:435px;height:36.4px;overflow:hidden;"><div style="position:absolute;left:-799px;top:-1330px;width:1646px;height:1497px;">
<span class="t" style="left:869.80px;top:1343.86px;font-size:23.2px;letter-spacing:-0.829px;color:#303030;transform:scaleY(1.05);transform-origin:0 84.65%;">L<u>i</u>nk</span>
<svg style="position:absolute;left:1204.4px;top:1345.3px" width="9" height="15"><polygon points="0,0 9,7.5 0,15" fill="#1a1a1a"/></svg>
<div style="left:1185.80px;top:1341.60px;width:1.30px;height:30.00px;background:#e1dfdd;"></div>
<svg style="position:absolute;left:0;top:0;overflow:visible" width="1646" height="1497" fill="none" stroke-linecap="butt" stroke-linejoin="miter"><path d="M827.8,1354.2 Q821.6,1353.6 821.6,1348.2 Q821.6,1342.2 828,1342.2 H835 Q841.2,1342.2 841.2,1348.2 Q841.2,1352.6 835.4,1354.4" stroke="#505050" stroke-width="2.4"/><path d="M837,1348.2 Q831.2,1349 831.2,1354.6 Q831.2,1360.8 837.4,1360.8 H845 Q851.4,1360.8 851.4,1354.6 Q851.4,1349.4 845.2,1347.6" stroke="#505050" stroke-width="2.4"/></svg>
</div></div>
<div style="left:861.80px;top:1384.80px;width:369.70px;height:1.60px;background:#e9e7e5;"></div>
<div style="left:797.30px;top:1387.60px;width:436.70px;height:55.60px;background:#d2d0ce;"></div>
<span class="t" style="left:869.80px;top:1403.66px;font-size:23.2px;letter-spacing:-0.404px;color:#303030;transform:scaleY(1.05);transform-origin:0 84.65%;">IFS Business Reporter Options</span>
<svg style="position:absolute;left:1204.4px;top:1405.5px" width="9" height="15"><polygon points="0,0 9,7.5 0,15" fill="#1a1a1a"/></svg>
<svg style="position:absolute;left:0;top:0;overflow:visible" width="1646" height="1497" fill="none" stroke-linecap="butt" stroke-linejoin="miter"><path d="M830.8,268 Q832.5,277 841.2,291 M841.6,268 Q840,277 831.2,291" stroke="#4a4a4a" stroke-width="1.9"/><circle cx="830.6" cy="295.2" r="3.3" stroke="#2b8dd6" stroke-width="2.1"/><circle cx="842.4" cy="295.2" r="3.3" stroke="#2b8dd6" stroke-width="2.1"/><path d="M833,350.2 H823 Q821.4,350.2 821.4,348.6 V327.4 Q821.4,325.8 823,325.8 H832.6 L835.2,328.6" stroke="#505050" stroke-width="2.1"/><path d="M834,333 Q834,331.4 835.6,331.4 H844.2 L851.2,338.4 V352.2 Q851.2,353.8 849.6,353.8 H835.6 Q834,353.8 834,352.2 Z" stroke="#505050" stroke-width="2.1" fill="#fff"/><path d="M844,331.6 V338.6 H851" stroke="#505050" stroke-width="1.9"/><path d="M838.6,345.2 H846.2 M838.6,349.2 H846.2" stroke="#7a7a7a" stroke-width="1.7"/><g transform="translate(0,0)"><path d="M829.6,384.2 H825.4 V409.2 H839.4" stroke="#b9b9b9" stroke-width="2" fill="#f3f3f3"/><path d="M826.4,385 H846.6 V394 H840 V409 H826.4 Z" fill="#f3f3f3" stroke="none"/><path d="M843.4,384.2 H847.2 V393.4" stroke="#b9b9b9" stroke-width="2"/><path d="M829.8,384 V389.4 H843.4 V384 H840.4 L836.6,380.2 L832.8,384 Z" stroke="#b9b9b9" stroke-width="1.8" fill="#fff"/><rect x="840.3" y="394.6" width="10.8" height="15" stroke="#b9b9b9" stroke-width="2" fill="#f3f3f3"/></g><g transform="translate(876.6,445.9) scale(1.15) translate(-824.4,-379.6)"><g transform="translate(0,0)"><path d="M829.6,384.2 H825.4 V409.2 H839.4" stroke="#b9b9b9" stroke-width="2" fill="#f3f3f3"/><path d="M826.4,385 H846.6 V394 H840 V409 H826.4 Z" fill="#f3f3f3" stroke="none"/><path d="M843.4,384.2 H847.2 V393.4" stroke="#b9b9b9" stroke-width="2"/><path d="M829.8,384 V389.4 H843.4 V384 H840.4 L836.6,380.2 L832.8,384 Z" stroke="#b9b9b9" stroke-width="1.8" fill="#fff"/><rect x="840.3" y="394.6" width="10.8" height="15" stroke="#b9b9b9" stroke-width="2" fill="#f3f3f3"/></g></g><circle cx="841.6" cy="580.9" r="10.2" stroke="#2b8dd6" stroke-width="2.3" fill="#fff"/><path d="M833.8,589 L822,600.2" stroke="#2b8dd6" stroke-width="2.5" stroke-linecap="round"/><circle cx="841.4" cy="576.4" r="1.5" fill="#444"/><path d="M841.4,579.4 V585.6" stroke="#444" stroke-width="2.6"/><path d="M836.6,809.3 H849.4 Q851.5,809.3 851.5,811.4 V832.6 Q851.5,834.7 849.4,834.7 H823.5 Q821.4,834.7 821.4,832.6 V823.5" stroke="#505050" stroke-width="2.2"/><rect x="837.8" y="809" width="12.6" height="4.6" fill="#9b9b9b"/><rect x="828" y="823.2" width="17" height="6.4" rx="2" stroke="#505050" stroke-width="2.1"/><circle cx="836.4" cy="818.6" r="2.3" fill="#8f8f8f"/><path d="M826.4,806 H834.4 L831,812.8 H833.4 L821.2,824 L825,816.2 H820.4 Z" fill="#e8740c" stroke="#fff" stroke-width="0.8"/><rect x="821.7" y="982.7" width="27.7" height="26.8" rx="1" stroke="#505050" stroke-width="2.2" fill="#fff"/><path d="M821.7,991 H849.4 M821.7,997.6 H849.4 M821.7,1004 H849.4 M835.4,991 V1009.4" stroke="#6a6a6a" stroke-width="1.9"/><path d="M825,985 H832 L828.5,989 Z M838.8,985 H845.8 L842.3,989 Z" fill="#2b8dd6"/><path d="M837.4,1045.5 H849 V1062.5 H834.6 L827.4,1069.8 V1062.5 H824.1 V1053.4" stroke="#505050" stroke-width="2.2" fill="#fafafa"/><path d="M820.4,1049.2 H834.4 M827.4,1042.4 V1056.2" stroke="#35a853" stroke-width="2.3"/><path d="M833.4,1102.6 H849 V1120.6 L841.2,1127 H824.1 V1111.2" stroke="#505050" stroke-width="2.2" fill="#fafafa"/><path d="M841.2,1127 V1120.8 H849" stroke="#505050" stroke-width="1.9"/><path d="M820.4,1105.8 H834.4 M827.4,1098.8 V1112.6" stroke="#35a853" stroke-width="2.3"/><rect x="826" y="1162.8" width="21.1" height="27.7" rx="1.4" stroke="#505050" stroke-width="2.3" fill="#fff"/><rect x="830.6" y="1168.8" width="5.3" height="5.4" fill="#858585"/><rect x="830.6" y="1178.4" width="5.3" height="5" fill="#858585"/><rect x="839.2" y="1170.4" width="3.2" height="2.2" fill="#858585"/><rect x="839.2" y="1180" width="3.2" height="2.2" fill="#858585"/></svg>
<div id="sub" style="left:1231.8px;top:1387px;width:212.2px;height:63.4px;"></div>
<span class="t" style="left:1306.30px;top:1406.78px;font-size:24.6px;letter-spacing:-0.497px;color:#303030;">Zoom In</span>
<svg style="position:absolute;left:0;top:0;overflow:visible" width="1646" height="1497" fill="none" stroke-linecap="butt" stroke-linejoin="miter"><rect x="1270.6" y="1405.6" width="13.4" height="11" fill="#e9eef8" stroke="#3a55a5" stroke-width="1.6"/><rect x="1272.6" y="1411" width="8" height="9" fill="#f5f7fb" stroke="#8a9fd0" stroke-width="1"/><circle cx="1272.8" cy="1417.6" r="4.4" fill="#cfe6f5" stroke="#8fa7b8" stroke-width="1.4"/><path d="M1269.6,1421 L1263.2,1425.6" stroke="#d98a1c" stroke-width="2.8" stroke-linecap="round"/><path d="M1263,1427.4 H1283" stroke="#9a9a9a" stroke-width="1"/></svg>
<svg style="position:absolute;left:0;top:0" width="1646" height="1497"><rect x="799.8" y="1360.6" width="671.4" height="95.8" fill="none" stroke="#8526e0" stroke-width="4.8"/></svg>
</body></html>
